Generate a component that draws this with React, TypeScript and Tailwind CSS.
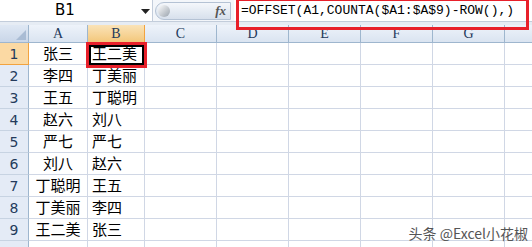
import React from 'react';

const colA = ['张三', '李四', '王五', '赵六', '严七', '刘八', '丁聪明', '丁美丽', '王二美'];
const colB = ['王二美', '丁美丽', '丁聪明', '刘八', '严七', '赵六', '王五', '李四', '张三'];
// H only peeks in at the right edge, its letter is off screen
const letters = ['A', 'B', 'C', 'D', 'E', 'F', 'G', ''];

const cjk = { fontFamily: '"Noto Sans CJK SC", "Liberation Sans", sans-serif' };

const App: React.FC = () => {
  return (
    <div className="relative w-[532px] h-[247px] overflow-hidden bg-white">
      {/* Formula bar */}
      <div className="flex h-[22px] border-b border-[#c3cddb] bg-white">
        <div className="relative flex w-[153px] items-center justify-center border-r border-[#c3cddb]">
          <span className="pr-[22px] text-[15px] text-black" style={{ fontFamily: '"DejaVu Sans", sans-serif' }}>B1</span>
          <svg className="absolute right-[2px] top-[9px]" width="9" height="5" viewBox="0 0 9 5">
            <path d="M0 0 H9 L4.5 5 Z" fill="#222" />
          </svg>
        </div>
        <div className="flex w-[81px] items-center bg-[#f3f6fa] pl-[2px]">
          <div className="flex h-[18px] w-[76px] items-center justify-between rounded-l-full border border-[#b4c2d4] bg-gradient-to-b from-[#f4f7fb] to-[#d7e0ec] pl-[2px] pr-[4px]">
            <div className="h-[12px] w-[12px] rounded-full bg-gradient-to-br from-[#ffffff] to-[#9aa3ad]" />
            <span className="text-[13px] font-bold italic text-[#555]" style={{ fontFamily: '"Liberation Serif", serif' }}>fx</span>
          </div>
        </div>
        <div className="flex flex-1 items-center pl-[7px]">
          <span className="text-[13px] text-black" style={{ fontFamily: '"Liberation Mono", monospace' }}>
            =OFFSET(A1,COUNTA($A1:$A$9)-ROW(),)
          </span>
        </div>
      </div>
      <div className="h-[3px] bg-[#e6ecf4]" />

      {/* Sheet grid */}
      <div className="grid grid-cols-[29px_59px_57px_72px_72px_72px_72px_72px_72px] grid-rows-[18px_repeat(10,22px)]">
        <div className="relative border-r border-b border-[#9eb6ce] bg-gradient-to-b from-[#dfe8f4] to-[#c9d6e8]">
          <svg className="absolute right-[2px] bottom-[2px]" width="10" height="10" viewBox="0 0 10 10">
            <path d="M10 0 V10 H0 Z" fill="#a9bcd4" />
          </svg>
        </div>
        {letters.map((l, i) => (
          <div
            key={i}
            className={
              l === 'B'
                ? 'flex items-center justify-center border-r border-b border-[#f2a33f] bg-gradient-to-b from-[#fae3b8] to-[#f3c77a] text-[14px] text-[#23395b]'
                : 'flex items-center justify-center border-r border-b border-[#9eb6ce] bg-gradient-to-b from-[#eef3fa] to-[#dae4f1] text-[14px] text-[#23395b]'
            }
            style={{ fontFamily: '"Liberation Serif", serif' }}
          >
            {l}
          </div>
        ))}
        {Array.from({ length: 10 }).map((_, r) => (
          <React.Fragment key={r}>
            <div
              className={
                r === 0
                  ? 'flex items-center justify-center border-r border-b border-[#f2a33f] bg-[#fbd9a3] pt-[2px] text-[14px] text-[#243b5c]'
                  : 'flex items-center justify-center border-r border-b border-r-[#9eb6ce] border-b-[#c7d3e2] bg-[#e4ebf6] pt-[2px] text-[14px] text-[#243b5c]'
              }
              style={{ fontFamily: '"DejaVu Sans", sans-serif' }}
            >
              {r < 9 ? r + 1 : ''}
            </div>
            <div className="flex items-center justify-center border-r border-b border-[#d0d7e5] text-[15px] text-black" style={cjk}>
              {colA[r] ?? ''}
            </div>
            <div className="flex items-center border-r border-b border-[#d0d7e5] pl-[4px] text-[15px] text-black" style={cjk}>
              {colB[r] ?? ''}
            </div>
            {[0, 1, 2, 3, 4, 5].map((c) => (
              <div key={c} className="border-r border-b border-[#d0d7e5]" />
            ))}
          </React.Fragment>
        ))}
      </div>

      {/* Annotations */}
      <div className="absolute left-[236px] top-[-2px] h-[32px] w-[293px] border-[3px] border-[#e8202a]" />
      <div className="absolute left-[86px] top-[42px] h-[26px] w-[61px] border-[3px] border-[#e8202a]" />
      <div className="absolute left-[89px] top-[45px] h-[20px] w-[55px] border-[2px] border-black" />
      <div
        className="absolute right-[4px] bottom-[3px] text-[14px] text-[#555]"
        style={{ fontFamily: '"Noto Sans CJK SC", "Liberation Sans", sans-serif' }}
      >
        头条 @Excel小花椒
      </div>
    </div>
  );
};

export default App;
